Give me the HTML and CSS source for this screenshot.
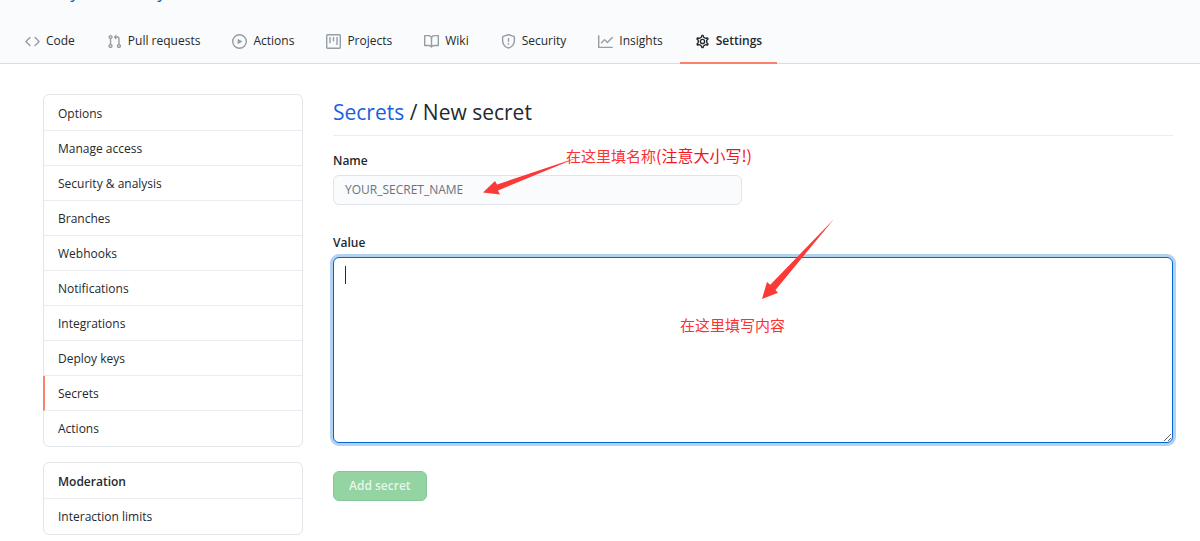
FILE: index.html
```html
<!DOCTYPE html>
<html lang="en">
<head>
    <meta charset="utf-8">
    <title>New secret</title>
    <link rel="stylesheet" href="styles.css">
</head>
<body>
    <header class="repo-header">
        <div class="repo-title"><a href="#">Chovyan</a> <span class="slash">/</span> <a href="#">checyin</a></div>
        <nav class="tabs">
            <a class="tab" href="#">
                <svg class="icon" viewBox="0 0 16 16"><path d="M4.72 3.22a.75.75 0 011.06 1.06L2.06 8l3.72 3.72a.75.75 0 11-1.06 1.06L.47 8.53a.75.75 0 010-1.06l4.25-4.25zm6.56 0a.75.75 0 10-1.06 1.06L13.94 8l-3.72 3.72a.75.75 0 101.06 1.06l4.25-4.25a.75.75 0 000-1.06l-4.25-4.25z"/></svg>
                Code
            </a>
            <a class="tab" href="#">
                <svg class="icon" viewBox="0 0 16 16"><path fill-rule="evenodd" d="M7.177 3.073L9.573.677A.25.25 0 0110 .854v4.792a.25.25 0 01-.427.177L7.177 3.427a.25.25 0 010-.354zM3.75 2.5a.75.75 0 100 1.5.75.75 0 000-1.5zm-2.25.75a2.25 2.25 0 113 2.122v5.256a2.251 2.251 0 11-1.5 0V5.372A2.25 2.25 0 011.5 3.25zM11 2.5h-1V4h1a1 1 0 011 1v5.628a2.251 2.251 0 101.5 0V5A2.5 2.5 0 0011 2.5zm1 10.25a.75.75 0 111.5 0 .75.75 0 01-1.5 0zM3.75 12a.75.75 0 100 1.5.75.75 0 000-1.5z"/></svg>
                Pull requests
            </a>
            <a class="tab" href="#">
                <svg class="icon" viewBox="0 0 16 16"><path fill-rule="evenodd" d="M1.5 8a6.5 6.5 0 1113 0 6.5 6.5 0 01-13 0zM8 0a8 8 0 100 16A8 8 0 008 0zM6.379 5.227A.25.25 0 006 5.442v5.117a.25.25 0 00.379.214l4.264-2.559a.25.25 0 000-.428L6.379 5.227z"/></svg>
                Actions
            </a>
            <a class="tab" href="#">
                <svg class="icon" viewBox="0 0 16 16"><path fill-rule="evenodd" d="M1.75 0A1.75 1.75 0 000 1.75v12.5C0 15.216.784 16 1.75 16h12.5A1.75 1.75 0 0016 14.25V1.75A1.75 1.75 0 0014.25 0H1.75zM1.5 1.75a.25.25 0 01.25-.25h12.5a.25.25 0 01.25.25v12.5a.25.25 0 01-.25.25H1.75a.25.25 0 01-.25-.25V1.75zM11.75 3a.75.75 0 00-.75.75v7.5a.75.75 0 001.5 0v-7.5a.75.75 0 00-.75-.75zm-8.25.75a.75.75 0 011.5 0v5.5a.75.75 0 01-1.5 0v-5.5zM8 3a.75.75 0 00-.75.75v3.5a.75.75 0 001.5 0v-3.5A.75.75 0 008 3z"/></svg>
                Projects
            </a>
            <a class="tab" href="#">
                <svg class="icon" viewBox="0 0 16 16"><path fill-rule="evenodd" d="M0 1.75A.75.75 0 01.75 1h4.253c1.227 0 2.317.59 3 1.501A3.744 3.744 0 0111.006 1h4.245a.75.75 0 01.75.75v10.5a.75.75 0 01-.75.75h-4.507a2.25 2.25 0 00-1.591.659l-.622.621a.75.75 0 01-1.06 0l-.622-.621A2.25 2.25 0 005.258 13H.75a.75.75 0 01-.75-.75V1.75zm8.755 3a2.25 2.25 0 012.25-2.25H14.5v9h-3.757c-.71 0-1.4.201-1.992.572l.004-7.322zm-1.504 7.324l.004-5.073-.002-2.253A2.25 2.25 0 005.003 2.5H1.5v9h3.757a3.75 3.75 0 011.994.574z"/></svg>
                Wiki
            </a>
            <a class="tab" href="#">
                <svg class="icon" viewBox="0 0 16 16"><path fill-rule="evenodd" d="M7.467.133a1.75 1.75 0 011.066 0l5.25 1.68A1.75 1.75 0 0115 3.48V7c0 1.566-.32 3.182-1.303 4.682-.983 1.498-2.585 2.813-5.032 3.855a1.7 1.7 0 01-1.33 0c-2.447-1.042-4.049-2.357-5.032-3.855C1.32 10.182 1 8.566 1 7V3.48a1.75 1.75 0 011.217-1.667l5.25-1.68zm.61 1.429a.25.25 0 00-.153 0l-5.25 1.68a.25.25 0 00-.174.238V7c0 1.358.275 2.666 1.057 3.86.784 1.194 2.121 2.34 4.366 3.297a.2.2 0 00.154 0c2.245-.956 3.582-2.104 4.366-3.298C13.225 9.666 13.5 8.36 13.5 7V3.48a.25.25 0 00-.174-.237l-5.25-1.68zM9 10.5a1 1 0 11-2 0 1 1 0 012 0zm-.25-5.75a.75.75 0 10-1.5 0v3a.75.75 0 001.5 0v-3z"/></svg>
                Security
            </a>
            <a class="tab" href="#">
                <svg class="icon" viewBox="0 0 16 16"><path fill-rule="evenodd" d="M1.5 1.75a.75.75 0 00-1.5 0v12.5c0 .414.336.75.75.75h14.5a.75.75 0 000-1.5H1.5V1.75zm14.28 2.53a.75.75 0 00-1.06-1.06L10 7.94 7.53 5.47a.75.75 0 00-1.06 0L3.22 8.72a.75.75 0 001.06 1.06L7 7.06l2.47 2.47a.75.75 0 001.06 0l5.25-5.25z"/></svg>
                Insights
            </a>
            <a class="tab active" href="#">
                <svg class="icon" viewBox="0 0 16 16"><g fill="none" stroke="currentColor" stroke-width="1.5"><path d="M7.429 1.525a6.593 6.593 0 011.142 0c.036.003.108.036.137.146l.289 1.105c.147.56.55.967.997 1.189.174.086.341.183.501.29.417.278.97.423 1.53.27l1.102-.303c.11-.03.175.016.195.046.219.31.41.641.573.989.014.031.022.11-.059.19l-.815.806c-.411.406-.562.957-.53 1.456a4.588 4.588 0 010 .582c-.032.499.119 1.05.53 1.456l.815.806c.08.08.073.159.059.19a6.494 6.494 0 01-.573.99c-.02.029-.086.074-.195.045l-1.103-.303c-.559-.153-1.112-.008-1.529.27-.16.107-.327.204-.5.29-.449.222-.851.628-.998 1.189l-.289 1.105c-.029.11-.101.143-.137.146a6.613 6.613 0 01-1.142 0c-.036-.003-.108-.037-.137-.146l-.289-1.105c-.147-.56-.55-.967-.997-1.189a4.502 4.502 0 01-.501-.29c-.417-.278-.97-.423-1.53-.27l-1.102.303c-.11.03-.175-.016-.195-.046a6.492 6.492 0 01-.573-.989c-.014-.031-.022-.11.059-.19l.815-.806c.411-.406.562-.957.53-1.456a4.587 4.587 0 010-.582c.032-.499-.119-1.05-.53-1.456l-.815-.806c-.08-.08-.073-.159-.059-.19a6.44 6.44 0 01.573-.99c.02-.029.086-.075.195-.045l1.103.303c.559.153 1.112.008 1.529-.27.16-.107.327-.204.5-.29.449-.222.851-.628.998-1.189l.289-1.105c.029-.11.101-.143.137-.146z"/><circle cx="8" cy="8" r="2.25"/></g></svg>
                Settings
            </a>
        </nav>
    </header>

    <div class="container">
        <aside class="sidebar">
            <nav class="menu">
                <a class="menu-item" href="#">Options</a>
                <a class="menu-item" href="#">Manage access</a>
                <a class="menu-item" href="#">Security &amp; analysis</a>
                <a class="menu-item" href="#">Branches</a>
                <a class="menu-item" href="#">Webhooks</a>
                <a class="menu-item" href="#">Notifications</a>
                <a class="menu-item" href="#">Integrations</a>
                <a class="menu-item" href="#">Deploy keys</a>
                <a class="menu-item selected" href="#">Secrets</a>
                <a class="menu-item" href="#">Actions</a>
            </nav>
            <nav class="menu">
                <span class="menu-item menu-heading">Moderation</span>
                <a class="menu-item" href="#">Interaction limits</a>
            </nav>
        </aside>

        <main class="content">
            <h1 class="page-title"><a href="#">Secrets</a> / New secret</h1>
            <form class="secret-form">
                <div class="field">
                    <label for="secret-name">Name</label>
                    <input class="text-input" id="secret-name" type="text" placeholder="YOUR_SECRET_NAME">
                </div>
                <div class="field">
                    <label for="secret-value">Value</label>
                    <div class="value-box">
                        <textarea class="text-area" id="secret-value"></textarea>
                        <span class="caret"></span>
                    </div>
                </div>
                <button class="btn" type="submit" disabled>Add secret</button>
            </form>

            <!-- hints drawn over the form -->
            <svg class="arrow arrow-name" width="98" height="38" viewBox="0 0 98 38"><path d="M0 36.500L12 25l2 3.500L96 1 15 34.500l2 4z"/></svg>
            <p class="hint hint-name">在这里填名称<span class="hint-strong">(注意大小写!)</span></p>
            <svg class="arrow arrow-value" width="72" height="80" viewBox="0 0 72 80"><path d="M0 80l5-17 3.300 2.700L72 0 13.500 71l2.500 2.700z"/></svg>
            <p class="hint hint-value">在这里填写内容</p>
        </main>
    </div>
</body>
</html>
```
FILE: styles.css
```css
* {
    box-sizing: border-box;
}

body {
    margin: 0;
    background: #fff;
    color: #24292e;
    font-family: "Open Sans", "Noto Sans CJK SC", sans-serif;
    font-size: 12px;
    line-height: 20px;
}

a {
    color: inherit;
    text-decoration: none;
}

.repo-header {
    background: #fafbfc;
    border-bottom: 1px solid #d9dce0;
}

/* scrolled almost out of view, only the descenders show */
.repo-title {
    display: flex;
    align-items: flex-end;
    gap: 6px;
    height: 18px;
    padding-left: 28px;
    overflow: hidden;
    color: #0366d6;
    font-size: 18px;
    line-height: 54px;
}

.tabs {
    display: flex;
    gap: 2px;
    padding: 0 10px;
    margin-bottom: -1px;
}

.tab {
    display: flex;
    align-items: center;
    gap: 6px;
    height: 46px;
    padding: 2px 15px 0;
    border-bottom: 2px solid transparent;
}

.tab.active {
    border-bottom-color: #f9826c;
    font-weight: 600;
}

.icon {
    width: 15px;
    height: 15px;
    fill: #959da5;
}

.container {
    display: flex;
    align-items: flex-start;
    gap: 30px;
    padding: 30px 27px 7px 43px;
}

.sidebar {
    width: 260px;
    flex-shrink: 0;
}

.menu {
    padding: 1px 0;
    margin-bottom: 15px;
    border: 1px solid #e1e4e8;
    border-radius: 6px;
}

.menu:last-child {
    margin-bottom: 0;
}

.menu-item {
    display: block;
    padding: 8px 14px 6px;
    border-bottom: 1px solid #eaecef;
}

.menu-item:last-child {
    border-bottom: none;
}

.menu-item.selected {
    margin-left: -1px;
    padding-left: 13px;
    border-left: 2px solid #f9826c;
}

.menu-heading {
    font-weight: 600;
}

.content {
    position: relative;
    flex: 1;
    min-width: 0;
}

.page-title {
    margin: 0 0 15px;
    padding-bottom: 5px;
    border-bottom: 1px solid #eaecef;
    font-size: 21px;
    font-weight: 400;
    line-height: 36px;
}

.page-title a {
    color: #1a5fdc;
}

.field {
    margin-bottom: 28px;
}

.field label {
    display: block;
    margin-bottom: 4px;
    font-weight: 600;
    line-height: 20px;
}

.text-input {
    display: block;
    width: 409px;
    max-width: 100%;
    height: 30px;
    padding: 0 11px 2px;
    border: 1px solid #e1e4e8;
    border-radius: 6px;
    background: #fafbfc;
    font: inherit;
}

.text-input::placeholder {
    color: #6a737d;
}

.value-box {
    position: relative;
}

.text-area {
    display: block;
    width: 100%;
    height: 186px;
    padding: 8px 11px;
    border: 1px solid #0366d6;
    border-radius: 6px;
    outline: none;
    box-shadow: 0 0 0 3px rgba(3, 102, 214, 0.3);
    font: inherit;
    resize: vertical;
}

.caret {
    position: absolute;
    top: 9px;
    left: 12px;
    width: 1px;
    height: 18px;
    background: #24292e;
}

.btn {
    padding: 4px 15px;
    border: 1px solid #85c796;
    border-radius: 6px;
    background: #94d3a2;
    color: rgba(255, 255, 255, 0.8);
    font: inherit;
    font-weight: 600;
}

.arrow,
.hint {
    position: absolute;
    margin: 0;
}

.arrow {
    fill: #fb3a38;
    overflow: visible;
}

.arrow-name {
    top: 62px;
    left: 150px;
}

.arrow-value {
    top: 125px;
    left: 429px;
}

.hint {
    color: #fb3233;
    font-family: "Noto Sans CJK SC", sans-serif;
    font-size: 15px;
    line-height: 22px;
    white-space: nowrap;
}

.hint-strong {
    color: #f5141c;
    font-size: 16px;
}

.hint-name {
    top: 50px;
    left: 233px;
}

.hint-value {
    top: 220px;
    left: 347px;
}
```
